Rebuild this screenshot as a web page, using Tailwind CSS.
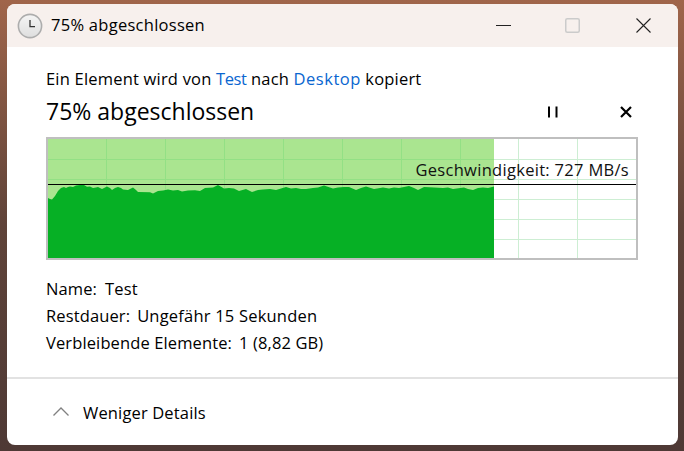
<!DOCTYPE html>
<html lang="de">
<head>
<meta charset="utf-8">
<script src="https://cdn.jsdelivr.net/npm/@tailwindcss/browser@4"></script>
</head>
<body class="m-0">
<div class="w-[684px] h-[451px] overflow-hidden pl-[7px] pt-[4px] bg-gradient-to-b from-[#a0654a] via-[#5f4339] to-[#4e3935] font-['Open_Sans','Noto_Sans',sans-serif] text-black">
  <div class="w-[671px] h-[441px] rounded-[8px] overflow-hidden bg-white flex flex-col">
    <div class="h-[43px] shrink-0 bg-[#f7f0ed] flex items-center pl-[10px]">
      <svg class="w-[26px] h-[26px] shrink-0" viewBox="0 0 26 26">
        <defs><linearGradient id="c" x1="0" y1="0" x2="0" y2="1"><stop offset="0" stop-color="#f5f5f5"/><stop offset="1" stop-color="#dedede"/></linearGradient></defs>
        <circle cx="13" cy="13" r="11.6" fill="url(#c)" stroke="#adadad" stroke-width="1.6"/>
        <path d="M13 7v6.6h5" fill="none" stroke="#333" stroke-width="1.3"/>
      </svg>
      <span class="ml-[8px] text-[16.5px] leading-none tracking-[0.27px]">75% abgeschlossen</span>
      <div class="ml-auto flex items-center">
        <svg class="w-[15px] h-[15px]" viewBox="0 0 15 15"><path d="M0 7.5h15" stroke="#222" stroke-width="1"/></svg>
        <svg class="w-[15px] h-[15px] ml-[54px]" viewBox="0 0 15 15"><rect x=".75" y=".75" width="13.5" height="13.5" rx="1.5" fill="none" stroke="#cbcbcb" stroke-width="1.5"/></svg>
        <svg class="w-[15px] h-[15px] ml-[56px] mr-[27px]" viewBox="0 0 15 15"><path d="M.5.5l14 14M14.500.5l-14 14" stroke="#222" stroke-width="1.1"/></svg>
      </div>
    </div>
    <div class="flex-1 px-[39px] pt-[21px]">
      <p class="h-[22px] leading-[22px] text-[16.5px] tracking-[0.2px] whitespace-nowrap">Ein Element wird von <span class="text-[#0a66d0] tracking-[-0.4px]">Test</span> nach <span class="text-[#0a66d0] tracking-[0.5px]">Desktop</span> kopiert</p>
      <div class="h-[44px] flex items-center">
        <span class="text-[23px] leading-none pb-[2px]">75% abgeschlossen</span>
        <svg class="w-[12px] h-[12px] ml-auto" viewBox="0 0 12 12"><path d="M2 .5v11M9.500.5v11" stroke="#000" stroke-width="2"/></svg>
        <svg class="w-[12px] h-[12px] ml-[61px] mr-[7px]" viewBox="0 0 12 12"><path d="M1 1l10 10M11 1L1 11" stroke="#000" stroke-width="2.2"/></svg>
      </div>
      <div class="relative mt-[3px] w-[592px] h-[123px]">
        <svg class="block w-[592px] h-[123px]" viewBox="46 137 592 123">
          <rect x="47" y="138" width="590" height="121" fill="#fff" stroke="#bfbfbf" stroke-width="2"/>
          <g stroke="#cdeed3" stroke-width="1">
            <path d="M518.500 139v119M577.500 139v119M494 159.500h142M494 179.500h142M494 199.500h142M494 219.500h142M494 239.500h142"/>
          </g>
          <rect x="48" y="139" width="446" height="119" fill="#aae590"/>
          <path d="M106.500 139v60M165.500 139v60M224.500 139v60M283.500 139v60M342.500 139v60M401.500 139v60M460.500 139v60M48 159.500h446M48 179.500h446" stroke="#93e085" stroke-width="1"/>
          <path fill="#06b025" d="M48 258V198L50 199L52 199.500L55 196L58 191L61 188L64 187L66 188L68 187L70 186.500L73 187L76 185.500L80 185L84 185L87 186.700L90 186.500L93 188L96 187.500L98 187L102 189L107 186.500L110 188L112 190L115 188L118 187L121 188L123 189.500L128 190L133 187.500L136 190L138 192L150 192.300L153 193.500L158 191L163 190.500L168 189.500L173 190.500L178 190L182 191.500L188 190.500L195 190.300L200 191L205 188L213 187.500L218 185L224 188.500L229 188L234 188.500L239 191L246 189L252 192L258 190L263 189.500L270 189L276 190L286 187L291 188.500L296 188L301 189L306 189L313 188L318 187.500L324 185.500L333 188.500L338 187.500L344 187L349 187L356 190L361 188L366 186.500L374 189L383 187.500L389 188.500L394 187.500L399 188L409 186L414 188L418 190L424 187L434 187.500L443 188L448 187.500L453 189L464 187.500L468 189L473 190L478 188L483 187.500L488 188L494 186.500V258Z"/>
          <rect x="48" y="184" width="588" height="1" fill="#000"/>
        </svg>
        <span class="absolute right-[9px] top-[22px] h-[22px] leading-[22px] text-[16.5px] tracking-[0.3px] whitespace-nowrap text-[#111]">Geschwindigkeit: 727 MB/s</span>
      </div>
      <div class="mt-[15px] text-[16.5px] tracking-[0.12px] leading-[27px]">
        <div class="h-[27px] flex gap-[8px]"><span>Name:</span><span>Test</span></div>
        <div class="h-[27px] flex gap-[7px]"><span>Restdauer:</span><span class="tracking-[0.2px]">Ungefähr 15 Sekunden</span></div>
        <div class="h-[27px] flex gap-[7px]"><span>Verbleibende Elemente:</span><span>1 (8,82 GB)</span></div>
      </div>
    </div>
    <div class="h-[68px] shrink-0 border-t-2 border-[#e2e2e2] flex items-center pl-[46px]">
      <svg class="w-[16px] h-[9px] shrink-0 mb-[2px]" viewBox="0 0 16 9"><path d="M.5 8.500L8 1l7.500 7.500" fill="none" stroke="#808080" stroke-width="1.3"/></svg>
      <span class="ml-[14px] text-[16.5px] tracking-[0.15px] pt-[2px]">Weniger Details</span>
    </div>
  </div>
</div>
</body>
</html>
